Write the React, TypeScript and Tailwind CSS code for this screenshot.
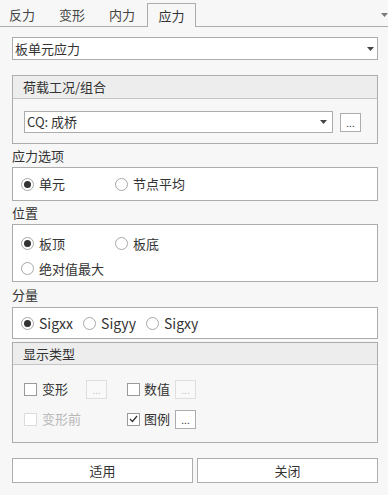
import React from 'react';

const Radio = ({ checked = false }: { checked?: boolean }) => (
  <span className="w-[13px] h-[13px] rounded-full border border-[#a8a8a8] bg-white flex items-center justify-center shrink-0">
    {checked && <span className="w-[7px] h-[7px] rounded-full bg-[#333]" />}
  </span>
);

const Check = ({ checked = false, disabled = false }: { checked?: boolean; disabled?: boolean }) => (
  <span
    className={`w-[13px] h-[13px] border bg-white flex items-center justify-center shrink-0 ${
      disabled ? 'border-[#dcdcdc]' : 'border-[#9a9a9a]'
    }`}
  >
    {checked && (
      <svg width="9" height="8" viewBox="0 0 9 8">
        <path d="M1 4 L3.5 6.5 L8 1" fill="none" stroke="#333" strokeWidth="1.3" />
      </svg>
    )}
  </span>
);

const Dots = ({ disabled = false }: { disabled?: boolean }) => (
  <span
    className={`w-[21px] h-[19px] border flex items-end justify-center pb-[3px] text-[10px] leading-[10px] ${
      disabled ? 'border-[#dedede] text-[#c4c4c4] bg-[#f9f9f9]' : 'border-[#adadad] text-[#333] bg-white'
    }`}
  >
    ...
  </span>
);

const Arrow = ({ color = '#444' }: { color?: string }) => (
  <svg width="7" height="4" viewBox="0 0 7 4" className="shrink-0">
    <path d="M0 0 H7 L3.5 4 Z" fill={color} />
  </svg>
);

const Label = ({ text, h }: { text: string; h: string }) => (
  <div className={`${h} flex items-center`}>{text}</div>
);

export default function App() {
  const tabs = ['反力', '变形', '内力'];
  return (
    <div className="w-[388px] h-[495px] bg-[#f7f7f7] text-[13px] leading-[18px] text-[#333] font-['Noto_Sans_CJK_SC','Noto_Sans',sans-serif] flex flex-col overflow-hidden">
      <div className="h-[27px] border-b border-[#acacac] flex items-end">
        <div className="flex items-end -ml-[3px]">
          {tabs.map(t => (
            <div key={t} className="w-[50px] h-[23px] flex items-center justify-center text-[#444]">
              {t}
            </div>
          ))}
          <div className="w-[49px] h-[24px] -mb-[1px] border border-b-0 border-[#acacac] bg-[#f7f7f7] flex items-center justify-center">
            应力
          </div>
        </div>
        <div className="ml-auto mb-[9px]">
          <Arrow color="#7a7a7a" />
        </div>
      </div>

      <div className="pl-[12px] pr-[10px] pt-[10px] flex flex-col">
        <div className="h-[23px] border border-[#acacac] bg-white flex items-center pl-[2px] pr-[3px]">
          <span className="flex-1">板单元应力</span>
          <Arrow />
        </div>

        <div className="mt-[15px] border border-[#acacac] flex flex-col">
          <div className="h-[23px] bg-[#ededed] border-b border-[#c4c4c4] flex items-center pl-[10px]">
            荷载工况/组合
          </div>
          <div className="flex items-center pl-[11px] pr-[14px] pt-[12px] pb-[10px]">
            <div className="w-[309px] h-[22px] border border-[#acacac] bg-white flex items-center pl-[2px] pr-[5px]">
              <span className="flex-1">CQ: 成桥</span>
              <Arrow />
            </div>
            <div className="ml-[7px]">
              <Dots />
            </div>
          </div>
        </div>

        <Label text="应力选项" h="h-[23px]" />
        <div className="h-[34px] border border-[#acacac] bg-white flex items-center pl-[8px]">
          <div className="w-[94px] flex items-center gap-[5px]">
            <Radio checked />
            <span>单元</span>
          </div>
          <div className="flex items-center gap-[5px]">
            <Radio />
            <span>节点平均</span>
          </div>
        </div>

        <Label text="位置" h="h-[23px]" />
        <div className="h-[58px] border border-[#acacac] bg-white flex flex-col pl-[8px] pt-[6px]">
          <div className="h-[25px] flex items-center">
            <div className="w-[94px] flex items-center gap-[5px]">
              <Radio checked />
              <span>板顶</span>
            </div>
            <div className="flex items-center gap-[5px]">
              <Radio />
              <span>板底</span>
            </div>
          </div>
          <div className="h-[25px] flex items-center gap-[5px]">
            <Radio />
            <span>绝对值最大</span>
          </div>
        </div>

        <Label text="分量" h="h-[25px]" />
        <div className="h-[32px] border border-[#acacac] bg-white flex items-center pl-[8px] gap-[10px]">
          {['Sigxx', 'Sigyy', 'Sigxy'].map((s, i) => (
            <div key={s} className="flex items-center gap-[5px]">
              <Radio checked={i === 0} />
              <span className="text-[14px]">{s}</span>
            </div>
          ))}
        </div>

        <div className="mt-[3px] border border-[#acacac] flex flex-col">
          <div className="h-[22px] bg-[#ededed] border-b border-[#c4c4c4] flex items-center pl-[10px]">
            显示类型
          </div>
          <div className="flex flex-col gap-[10px] pl-[11px] pt-[14px] pb-[13px]">
            <div className="h-[20px] flex items-center">
              <div className="w-[62px] flex items-center gap-[5px]">
                <Check />
                <span>变形</span>
              </div>
              <Dots disabled />
              <div className="ml-[20px] w-[48px] flex items-center gap-[4px]">
                <Check />
                <span>数值</span>
              </div>
              <Dots disabled />
            </div>
            <div className="h-[20px] flex items-center">
              <div className="w-[62px] flex items-center gap-[5px] text-[#b8b8b8]">
                <Check disabled />
                <span>变形前</span>
              </div>
              <div className="w-[21px]" />
              <div className="ml-[20px] w-[48px] flex items-center gap-[4px]">
                <Check checked />
                <span>图例</span>
              </div>
              <Dots />
            </div>
          </div>
        </div>

        <div className="mt-[15px] grid grid-cols-2 gap-[4px]">
          <button className="h-[25px] border border-[#adadad] bg-white flex items-center justify-center">适用</button>
          <button className="h-[25px] border border-[#adadad] bg-white flex items-center justify-center">关闭</button>
        </div>
      </div>
    </div>
  );
}
